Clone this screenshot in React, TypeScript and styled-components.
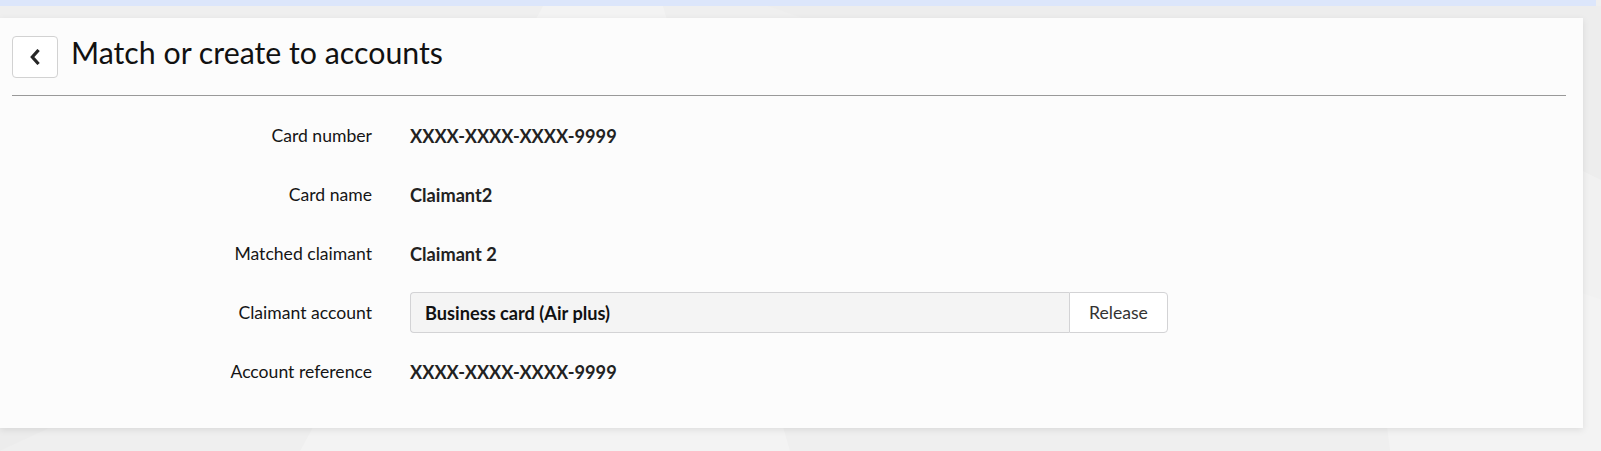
import React from "react";
import styled, { createGlobalStyle } from "styled-components";

const Global = createGlobalStyle`
  html, body { margin: 0; padding: 0; }
  body {
    background: #efefef;
    font-family: Lato, "Open Sans", Arial, sans-serif;
    color: #222;
    overflow: hidden;
  }
`;

const Page = styled.div`
  position: relative;
  width: 1601px;
  height: 451px;
  overflow: hidden;
`;

const Backdrop = styled.svg`
  position: absolute;
  inset: 0;
  width: 1601px;
  height: 451px;
  pointer-events: none;
`;

const Content = styled.div`
  position: relative;
  display: flex;
  flex-direction: column;
`;

const TopStrip = styled.div`
  width: 1596px;
  height: 6px;
  background: #dce6fb;
`;

const Panel = styled.section`
  margin-top: 12px;
  width: 1583px;
  height: 410px;
  box-sizing: border-box;
  background: rgba(253, 253, 253, 0.92);
  box-shadow: 0 2px 7px rgba(0, 0, 0, 0.09);
  padding: 18px 17px 0 12px;
`;

const Header = styled.header`
  display: flex;
  align-items: flex-start;
  gap: 13px;
  padding-bottom: 17px;
  border-bottom: 1px solid #999;
`;

const BackButton = styled.button`
  width: 46px;
  height: 42px;
  box-sizing: border-box;
  border: 1px solid #d2d2d2;
  border-radius: 4px;
  background: #fff;
  display: flex;
  align-items: center;
  justify-content: center;
  padding: 0;
  cursor: pointer;
`;

const Title = styled.h1`
  margin: -2px 0 0;
  font-family: Lato, sans-serif;
  font-weight: 400;
  font-size: 30.3px;
  line-height: 36px;
  color: #111;
`;

const Fields = styled.div`
  display: grid;
  grid-template-columns: 372px 1fr;
  column-gap: 38px;
  row-gap: 18px;
  padding-top: 19px;
  margin-left: -12px;
`;

const Label = styled.div`
  height: 41px;
  display: flex;
  align-items: center;
  justify-content: flex-end;
  font-size: 17.6px;
  color: #151515;
`;

const Value = styled.div`
  height: 41px;
  display: flex;
  align-items: center;
  font-size: 18.2px;
  font-weight: 700;
  color: #222;
`;

const InputGroup = styled.div`
  display: flex;
  width: 758px;
  height: 41px;
`;

const AccountBox = styled.div`
  flex: 1;
  box-sizing: border-box;
  display: flex;
  align-items: center;
  padding-left: 14px;
  background: #f4f4f4;
  border: 1px solid #d3d3d5;
  border-right: none;
  border-radius: 4px 0 0 4px;
  font-size: 18.2px;
  font-weight: 700;
  color: #111;
`;

const ReleaseButton = styled.button`
  width: 99px;
  box-sizing: border-box;
  border: 1px solid #d3d3d5;
  border-radius: 0 4px 4px 0;
  background: #fff;
  font-family: Lato, sans-serif;
  font-size: 17.6px;
  color: #333;
  cursor: pointer;
  padding: 0;
`;

const rows: { label: string; value: string; account?: boolean }[] = [
  { label: "Card number", value: "XXXX-XXXX-XXXX-9999" },
  { label: "Card name", value: "Claimant2" },
  { label: "Matched claimant", value: "Claimant 2" },
  { label: "Claimant account", value: "Business card (Air plus)", account: true },
  { label: "Account reference", value: "XXXX-XXXX-XXXX-9999" },
];

export default function App() {
  return (
    <>
      <Global />
      <Page>
        <Backdrop viewBox="0 0 1601 451">
          <polygon points="543,6 663,6 790,451 300,451" fill="#ffffff" opacity="0.25" />
          <polygon points="767,6 1601,6 1601,300" fill="#000" opacity="0.008" />
          <polygon points="1340,50 1601,180 1601,451 1390,451" fill="#fff" opacity="0.25" />
          <polygon points="0,160 240,340 0,451" fill="#000" opacity="0.01" />
        </Backdrop>
        <Content>
          <TopStrip />
          <Panel>
            <Header>
              <BackButton aria-label="Back">
                <svg width="12" height="16" viewBox="0 0 12 16">
                  <polyline
                    points="8.5,2.2 3.3,8 8.5,13.8"
                    fill="none"
                    stroke="#262626"
                    strokeWidth="3.2"
                    strokeLinecap="square"
                  />
                </svg>
              </BackButton>
              <Title>Match or create to accounts</Title>
            </Header>
            <Fields>
              {rows.map((r) => (
                <React.Fragment key={r.label}>
                  <Label>{r.label}</Label>
                  {r.account ? (
                    <Value>
                      <InputGroup>
                        <AccountBox>{r.value}</AccountBox>
                        <ReleaseButton>Release</ReleaseButton>
                      </InputGroup>
                    </Value>
                  ) : (
                    <Value>{r.value}</Value>
                  )}
                </React.Fragment>
              ))}
            </Fields>
          </Panel>
        </Content>
      </Page>
    </>
  );
}
